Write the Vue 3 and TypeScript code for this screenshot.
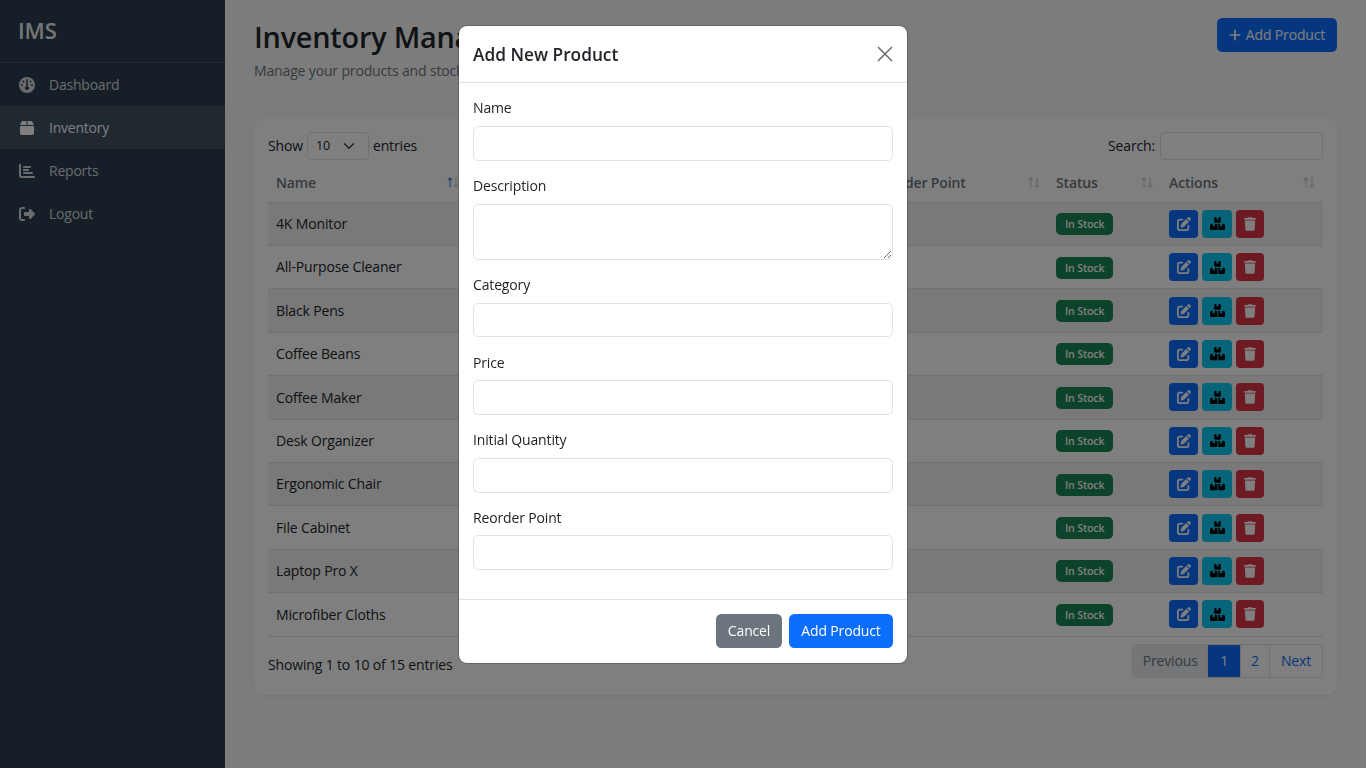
<script setup lang="ts">
const products: string[] = ['4K Monitor','All-Purpose Cleaner','Black Pens','Coffee Beans','Coffee Maker','Desk Organizer','Ergonomic Chair','File Cabinet','Laptop Pro X','Microfiber Cloths']
const nav = [
  { label: 'Dashboard', vb: '0 0 512 512', d: 'M0 256a256 256 0 1 1 512 0A256 256 0 1 1 0 256zm320 96c0-26.9-16.5-49.9-40-59.3V88c0-13.3-10.7-24-24-24s-24 10.7-24 24V292.7c-23.5 9.5-40 32.5-40 59.3c0 35.3 28.7 64 64 64s64-28.7 64-64zM144 176a32 32 0 1 0 0-64 32 32 0 1 0 0 64zm-16 80a32 32 0 1 0 -64 0 32 32 0 1 0 64 0zm288 32a32 32 0 1 0 0-64 32 32 0 1 0 0 64zM400 144a32 32 0 1 0 -64 0 32 32 0 1 0 64 0z', active: false },
  { label: 'Inventory', vb: '0 0 448 512', d: 'M50.7 58.5L0 160H208V32H93.7C75.5 32 58.9 42.3 50.7 58.5zM240 160H448L397.3 58.5C389.1 42.3 372.5 32 354.3 32H240V160zm208 32H0V416c0 35.3 28.7 64 64 64H384c35.3 0 64-28.7 64-64V192z', active: true },
  { label: 'Reports', vb: '0 0 512 512', d: 'M32 32c17.7 0 32 14.3 32 32V400c0 8.8 7.2 16 16 16H480c17.7 0 32 14.3 32 32s-14.3 32-32 32H80c-44.2 0-80-35.8-80-80V64C0 46.3 14.3 32 32 32zm96 96c0-17.7 14.3-32 32-32l192 0c17.7 0 32 14.3 32 32s-14.3 32-32 32l-192 0c-17.7 0-32-14.3-32-32zm32 64H288c17.7 0 32 14.3 32 32s-14.3 32-32 32H160c-17.7 0-32-14.3-32-32s14.3-32 32-32zm0 96H416c17.7 0 32 14.3 32 32s-14.3 32-32 32H160c-17.7 0-32-14.3-32-32s14.3-32 32-32z', active: false },
  { label: 'Logout', vb: '0 0 512 512', d: 'M377.9 105.9L500.7 228.7c7.2 7.2 11.3 17.1 11.3 27.3s-4.1 20.1-11.3 27.3L377.9 406.1c-6.4 6.4-15 9.9-24 9.9c-18.7 0-33.9-15.2-33.9-33.9l0-62.1-128 0c-17.7 0-32-14.3-32-32l0-64c0-17.7 14.3-32 32-32l128 0 0-62.1c0-18.7 15.2-33.9 33.9-33.9c9 0 17.6 3.6 24 9.9zM160 96L96 96c-17.7 0-32 14.3-32 32l0 256c0 17.7 14.3 32 32 32l64 0c17.7 0 32 14.3 32 32s-14.3 32-32 32l-64 0c-53 0-96-43-96-96L0 128C0 75 43 32 96 32l64 0c17.7 0 32 14.3 32 32s-14.3 32-32 32z', active: false },
]
const fields = [
  { label: 'Name', area: false },
  { label: 'Description', area: true },
  { label: 'Category', area: false },
  { label: 'Price', area: false },
  { label: 'Initial Quantity', area: false },
  { label: 'Reorder Point', area: false },
]
const headers = [
  { label: 'Name', active: true },
  { label: '', active: false },
  { label: 'Reorder Point', active: false },
  { label: 'Status', active: false },
  { label: 'Actions', active: false },
]
const editD = 'M471.6 21.7c-21.9-21.9-57.3-21.9-79.2 0L362.3 51.7l97.9 97.9 30.1-30.1c21.9-21.9 21.9-57.3 0-79.2L471.6 21.7zm-299.2 220c-6.1 6.1-10.8 13.6-13.5 21.9l-29.6 88.8c-2.9 8.6-.6 18.1 5.8 24.6s15.9 8.7 24.6 5.8l88.8-29.6c8.2-2.7 15.7-7.4 21.9-13.5L437.7 172.3 339.7 74.3 172.4 241.7zM96 64C43 64 0 107 0 160V416c0 53 43 96 96 96H352c53 0 96-43 96-96V320c0-17.7-14.3-32-32-32s-32 14.3-32 32v96c0 17.7-14.3 32-32 32H96c-17.7 0-32-14.3-32-32V160c0-17.7 14.3-32 32-32h96c17.7 0 32-14.3 32-32s-14.3-32-32-32H96z'
const boxesD = 'M248 0H208c-26.5 0-48 21.5-48 48V160c0 35.3 28.7 64 64 64H352c35.3 0 64-28.7 64-64V48c0-26.5-21.5-48-48-48H328V80c0 8.8-7.2 16-16 16H264c-8.8 0-16-7.2-16-16V0zM64 256c-35.3 0-64 28.7-64 64V448c0 35.3 28.7 64 64 64H224c35.3 0 64-28.7 64-64V320c0-35.3-28.7-64-64-64H184v80c0 8.8-7.2 16-16 16H120c-8.8 0-16-7.2-16-16V256H64zM352 512H512c35.3 0 64-28.7 64-64V320c0-35.3-28.7-64-64-64H472v80c0 8.8-7.2 16-16 16H408c-8.8 0-16-7.2-16-16V256H352c-15 0-28.8 5.1-39.7 13.8c4.9 15.4 7.7 31.7 7.7 48.2V448c0 23.3-6.2 45.2-17.1 64z'
const trashD = 'M135.2 17.7L128 32H32C14.3 32 0 46.3 0 64S14.3 96 32 96H416c17.7 0 32-14.3 32-32s-14.3-32-32-32H320l-7.2-14.3C307.4 6.8 296.3 0 284.2 0H163.8c-12.1 0-23.2 6.8-28.6 17.7zM416 128H32L53.2 467c1.6 25.3 22.6 45 47.9 45H346.9c25.3 0 46.3-19.7 47.9-45L416 128z'
</script>

<template>
  <div class="layout">
    <aside class="sidebar">
      <div class="brand">IMS</div>
      <nav class="nav">
        <a v-for="n in nav" :key="n.label" class="nav-item" :class="{ active: n.active }">
          <span class="nav-ico"><svg :viewBox="n.vb" width="16" height="16" fill="currentColor"><path :d="n.d" /></svg></span>
          <span>{{ n.label }}</span>
        </a>
      </nav>
    </aside>
    <main class="main">
      <header class="page-head">
        <div>
          <h1 class="title">Inventory Management</h1>
          <p class="sub">Manage your products and stock levels</p>
        </div>
        <button class="btn btn-primary add">
          <svg viewBox="0 0 448 512" width="12" height="14" fill="currentColor"><path d="M256 80c0-17.7-14.3-32-32-32s-32 14.3-32 32V224H48c-17.7 0-32 14.3-32 32s14.3 32 32 32H192V432c0 17.7 14.3 32 32 32s32-14.3 32-32V288H400c17.7 0 32-14.3 32-32s-14.3-32-32-32H256V80z" /></svg>
          Add Product
        </button>
      </header>
      <section class="card">
        <div class="controls">
          <div class="inline">
            <span>Show</span>
            <div class="select"><span>10</span><svg viewBox="0 0 16 16" width="12" height="12" fill="none" stroke="#343a40" stroke-width="1.7" stroke-linecap="round" stroke-linejoin="round"><path d="m2 5 6 6 6-6" /></svg></div>
            <span>entries</span>
          </div>
          <div class="inline">
            <span>Search:</span>
            <div class="search"></div>
          </div>
        </div>
        <table class="table">
          <colgroup>
            <col class="c1" /><col class="c2" /><col class="c3" /><col class="c4" /><col class="c5" />
          </colgroup>
          <thead>
            <tr>
              <th v-for="(h, hi) in headers" :key="hi">
                <div v-if="h.label" class="th">
                  <span>{{ h.label }}</span>
                  <svg class="sort" viewBox="0 0 12 11" width="12" height="11" fill="none" stroke-width="1.2">
                    <path :class="{ on: h.active }" d="M3 10.5V1M1 3.2 3 1l2 2.2" />
                    <path d="M9 .5V10M7 7.8 9 10l2-2.2" />
                  </svg>
                </div>
              </th>
            </tr>
          </thead>
          <tbody>
            <tr v-for="(p, i) in products" :key="p" :class="{ odd: i % 2 === 0 }">
              <td>{{ p }}</td>
              <td></td>
              <td></td>
              <td><span class="badge">In Stock</span></td>
              <td>
                <div class="actions">
                  <button class="act a-edit"><svg viewBox="0 0 512 512" width="14" height="14" fill="currentColor"><path :d="editD" /></svg></button>
                  <button class="act a-info"><svg viewBox="0 0 576 512" width="15" height="13.3" fill="currentColor"><path :d="boxesD" /></svg></button>
                  <button class="act a-del"><svg viewBox="0 0 448 512" width="12" height="14" fill="currentColor"><path :d="trashD" /></svg></button>
                </div>
              </td>
            </tr>
          </tbody>
        </table>
        <div class="foot">
          <span class="info">Showing 1 to 10 of 15 entries</span>
          <div class="pager">
            <span class="pg disabled">Previous</span>
            <span class="pg current">1</span>
            <span class="pg two">2</span>
            <span class="pg">Next</span>
          </div>
        </div>
      </section>
    </main>
    <div class="backdrop"></div>
    <div class="modal-wrap">
      <div class="modal">
        <div class="m-head">
          <h2 class="m-title">Add New Product</h2>
          <svg class="close" viewBox="0 0 16 16" width="16" height="16" fill="none" stroke="#6b6b6b" stroke-width="1.5"><path d="M1 1l14 14M15 1 1 15" /></svg>
        </div>
        <div class="m-body">
          <div v-for="f in fields" :key="f.label" class="field">
            <label class="lbl">{{ f.label }}</label>
            <textarea v-if="f.area" class="ctl area"></textarea>
            <input v-else class="ctl" type="text" />
          </div>
        </div>
        <div class="m-foot">
          <button class="btn btn-secondary">Cancel</button>
          <button class="btn btn-primary wide">Add Product</button>
        </div>
      </div>
    </div>
  </div>
</template>

<style>
html, body { margin: 0; background: #f8f9fa; }
</style>

<style scoped>
.layout { display: flex; min-height: 768px; font-family: "Open Sans", "Noto Sans", sans-serif; font-size: 14px; letter-spacing: -0.15px; line-height: 21.6px; color: #212529; }
.sidebar { width: 225px; flex: none; background: #2c3e50; color: rgba(255,255,255,.8); }
.brand { height: 62px; border-bottom: 1px solid rgba(255,255,255,.1); padding: 0 18px; font-size: 22px; font-weight: 600; display: flex; align-items: center; color: #e9ecef; }
.nav-item { height: 43.2px; display: flex; align-items: center; gap: 14px; padding: 0 19px; color: rgba(255,255,255,.8); letter-spacing: -0.22px; }
.nav-item.active { background: rgba(255,255,255,.1); color: #fff; }
.nav-ico { width: 16px; display: flex; justify-content: center; }
.main { flex: 1; padding: 18px 29px; min-width: 0; }
.page-head { display: flex; justify-content: space-between; align-items: flex-start; height: 100px; }
.title { margin: 0; font-size: 28.8px; font-weight: 600; line-height: 38px; letter-spacing: -0.2px; }
.sub { margin: 4px 0 0; color: #6c757d; }
.btn { border: 1px solid transparent; border-radius: 5.4px; font: inherit; letter-spacing: inherit; font-weight: 500; height: 34.4px; padding: 0 10.8px; color: #fff; display: inline-flex; align-items: center; gap: 5px; box-sizing: border-box; }
.btn.wide { padding: 0 11.3px; }
.btn-primary { background: #0d6efd; }
.btn-secondary { background: #6c757d; }
.card { background: #fff; border-radius: 10px; padding: 14px; height: 577px; box-sizing: border-box; box-shadow: 0 2px 6px rgba(0,0,0,.05); }
.controls { display: flex; justify-content: space-between; align-items: center; height: 28px; }
.inline { display: flex; align-items: center; gap: 5px; }
.select { width: 62px; height: 28px; margin-left: -1px; margin-right: -1px; box-sizing: border-box; border: 1px solid #dee2e6; border-radius: 4px; display: flex; align-items: center; justify-content: space-between; padding: 0 13px 0 8px; font-size: 12.6px; }
.search { width: 163px; height: 28px; box-sizing: border-box; border: 1px solid #dee2e6; border-radius: 4px; }
.table { width: 1055px; table-layout: fixed; border-collapse: collapse; margin-top: 5px; }
.c1 { width: 199px; }
.c2 { width: 399px; }
.c3 { width: 182px; }
.c4 { width: 113px; }
.c5 { width: 162px; }
.table th { height: 37.1px; padding: 0 8px 2px; box-sizing: border-box; font-weight: 600; color: #6c757d; text-align: left; border-bottom: 1px solid #dee2e6; }
.th { display: flex; justify-content: space-between; align-items: center; }
.sort { stroke: #c9ced3; }
.sort .on { stroke: #4f86d6; }
.table td { height: 43.4px; padding: 0 8px; border-bottom: 1px solid #dee2e6; box-sizing: border-box; }
.odd td { background: #f2f2f2; }
.badge { display: inline-block; background: #198754; color: #fff; font-size: 10.6px; font-weight: 600; line-height: 22px; height: 22px; padding: 0 9px; border-radius: 5px; }
.actions { display: flex; gap: 4px; }
.act { height: 28px; border: 0; border-radius: 4px; padding: 0; display: flex; align-items: center; justify-content: center; }
.a-edit { width: 29px; background: #0d6efd; color: #fff; }
.a-info { width: 30px; background: #0dcaf0; color: #000; }
.a-del { width: 28px; background: #dc3545; color: #fff; }
.foot { display: flex; justify-content: space-between; align-items: flex-start; margin-top: 7.6px; height: 34px; }
.info { padding-top: 10px; }
.pager { display: flex; border: 1px solid #dee2e6; border-radius: 5px; overflow: hidden; height: 34px; box-sizing: border-box; color: #0d6efd; }
.pg { display: flex; align-items: center; justify-content: center; padding: 0 11px; border-left: 1px solid #dee2e6; }
.pg:first-child { border-left: 0; }
.pg.disabled { background: #e9ecef; color: #6c757d; padding: 0 9.5px; }
.pg.current { background: #0d6efd; color: #fff; padding: 0 12px; }
.pg.two { padding: 0 10px; }
.backdrop { position: fixed; inset: 0; background: rgba(0,0,0,.5); }
.modal-wrap { position: fixed; inset: 0; display: flex; justify-content: center; align-items: flex-start; padding-top: 26.4px; }
.modal { width: 448px; background: #fff; border-radius: 8px; box-sizing: border-box; box-shadow: 0 0 0 1px rgba(0,0,0,.2); }
.m-head { height: 56.7px; box-sizing: border-box; border-bottom: 1px solid #dee2e6; display: flex; align-items: center; justify-content: space-between; padding: 0 14px; }
.m-title { margin: 2px 0 0; font-size: 17.3px; font-weight: 600; letter-spacing: 0; }
.m-body { padding: 14.4px 14px; }
.field { margin-bottom: 14.2px; }
.lbl { display: block; margin-bottom: 7.2px; height: 21.6px; }
.ctl { display: block; width: 100%; box-sizing: border-box; height: 34.6px; border: 1px solid #dee2e6; border-radius: 5.4px; padding: 5.4px 10.8px; font: inherit; outline: 0; background: #fff; }
.area { height: 56px; resize: vertical; }
.m-foot { height: 64px; box-sizing: border-box; border-top: 1px solid #dee2e6; display: flex; justify-content: flex-end; align-items: center; gap: 7px; padding: 0 14px; }
</style>
